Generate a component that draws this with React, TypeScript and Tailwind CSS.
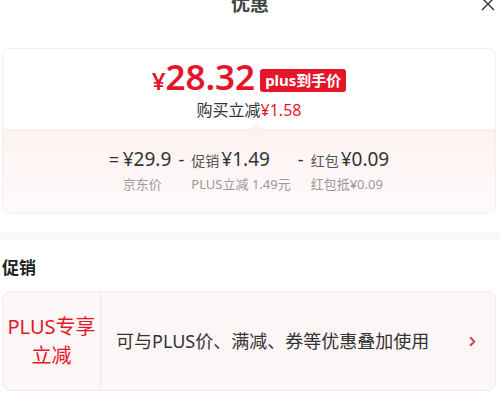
import { ChevronRight } from 'lucide-react'

const font = { fontFamily: '"Noto Sans", "Noto Sans CJK SC", sans-serif' }

function Part({ op, value, prefix, label }: { op: string; value: string; prefix?: string; label: string }) {
  return (
    <div className="flex items-start gap-[6px]">
      <span className="text-[18px] leading-[24px] text-[#333] w-[8px] text-center">{op}</span>
      <div className="flex flex-col items-start">
        <div className="flex items-baseline h-[24px]">
          {prefix && <span className="text-[14px] text-[#555] mr-[2px]">{prefix}</span>}
          <span className="text-[19px] leading-[24px] text-[#333]">{value}</span>
        </div>
        <span className="text-[13px] leading-[20px] text-[#999] mt-[3px] whitespace-nowrap">{label}</span>
      </div>
    </div>
  )
}

export default function App() {
  return (
    <div className="w-[500px] h-[404px] bg-white overflow-hidden" style={font}>
      <div className="relative h-[48px]">
        <p className="text-center text-[19px] leading-[20px] font-bold text-[#444] -translate-y-[6px]">优惠</p>
        <button className="absolute right-[5px] top-[-3px] text-[#333]">
          <svg width="14" height="14" viewBox="0 0 14 14" fill="none" stroke="currentColor" strokeWidth="1.4">
            <path d="M1 1l12 12M13 1L1 13" />
          </svg>
        </button>
      </div>

      <div className="mx-[2px] w-[494px] rounded-lg border border-[#f1eeee] overflow-hidden">
        <div className="h-[80px] flex flex-col items-center pt-[13px]">
          <div className="flex items-center gap-[5px]">
            <span className="text-[#e5162a] font-semibold leading-[30px] flex items-baseline">
              <span className="text-[24px]">¥</span>
              <span className="text-[35px]">28.32</span>
            </span>
            <span className="bg-[#e5162a] text-white text-[15px] font-bold leading-[23px] px-[5px] rounded-[3px] mt-[3px]">plus到手价</span>
          </div>
          <p className="text-[16px] leading-[20px] text-[#333] mt-[4px]">
            购买立减<span className="text-[#e5162a]">¥1.58</span>
          </p>
        </div>
        <div className="relative h-[84px] bg-gradient-to-b from-[#fdf2f2] to-[#fffafa] border-t border-[#fbeeee] flex justify-center pt-[17px] gap-[6px]">
          <div className="absolute left-[247px] top-[-6px] w-0 h-0 border-x-[6px] border-x-transparent border-b-[6px] border-b-[#fdf2f2]" />
          <Part op="=" value="¥29.9" label="京东价" />
          <Part op="-" prefix="促销" value="¥1.49" label="PLUS立减 1.49元" />
          <Part op="-" prefix="红包" value="¥0.09" label="红包抵¥0.09" />
        </div>
      </div>

      <div className="mt-[18px] h-[8px] bg-[#f7f8fa]" />

      <h2 className="px-[2px] mt-[16px] text-[17px] leading-[24px] font-bold text-[#222]">促销</h2>

      <div className="mt-[11px] mx-[2px] w-[494px] h-[100px] rounded-lg border border-[#f4eaea] bg-[#fdf6f6] flex items-center">
        <div className="w-[98px] h-full border-r border-[#f3e6e6] flex flex-col items-center justify-center text-[#e5162a] text-[20px] leading-[29px]">
          <span>PLUS专享</span>
          <span>立减</span>
        </div>
        <p className="flex-1 pl-[15px] text-[18px] text-[#333]">可与PLUS价、满减、券等优惠叠加使用</p>
        <ChevronRight className="w-[15px] h-[15px] text-[#e23a50] mr-[15px]" strokeWidth={3} />
      </div>
    </div>
  )
}
